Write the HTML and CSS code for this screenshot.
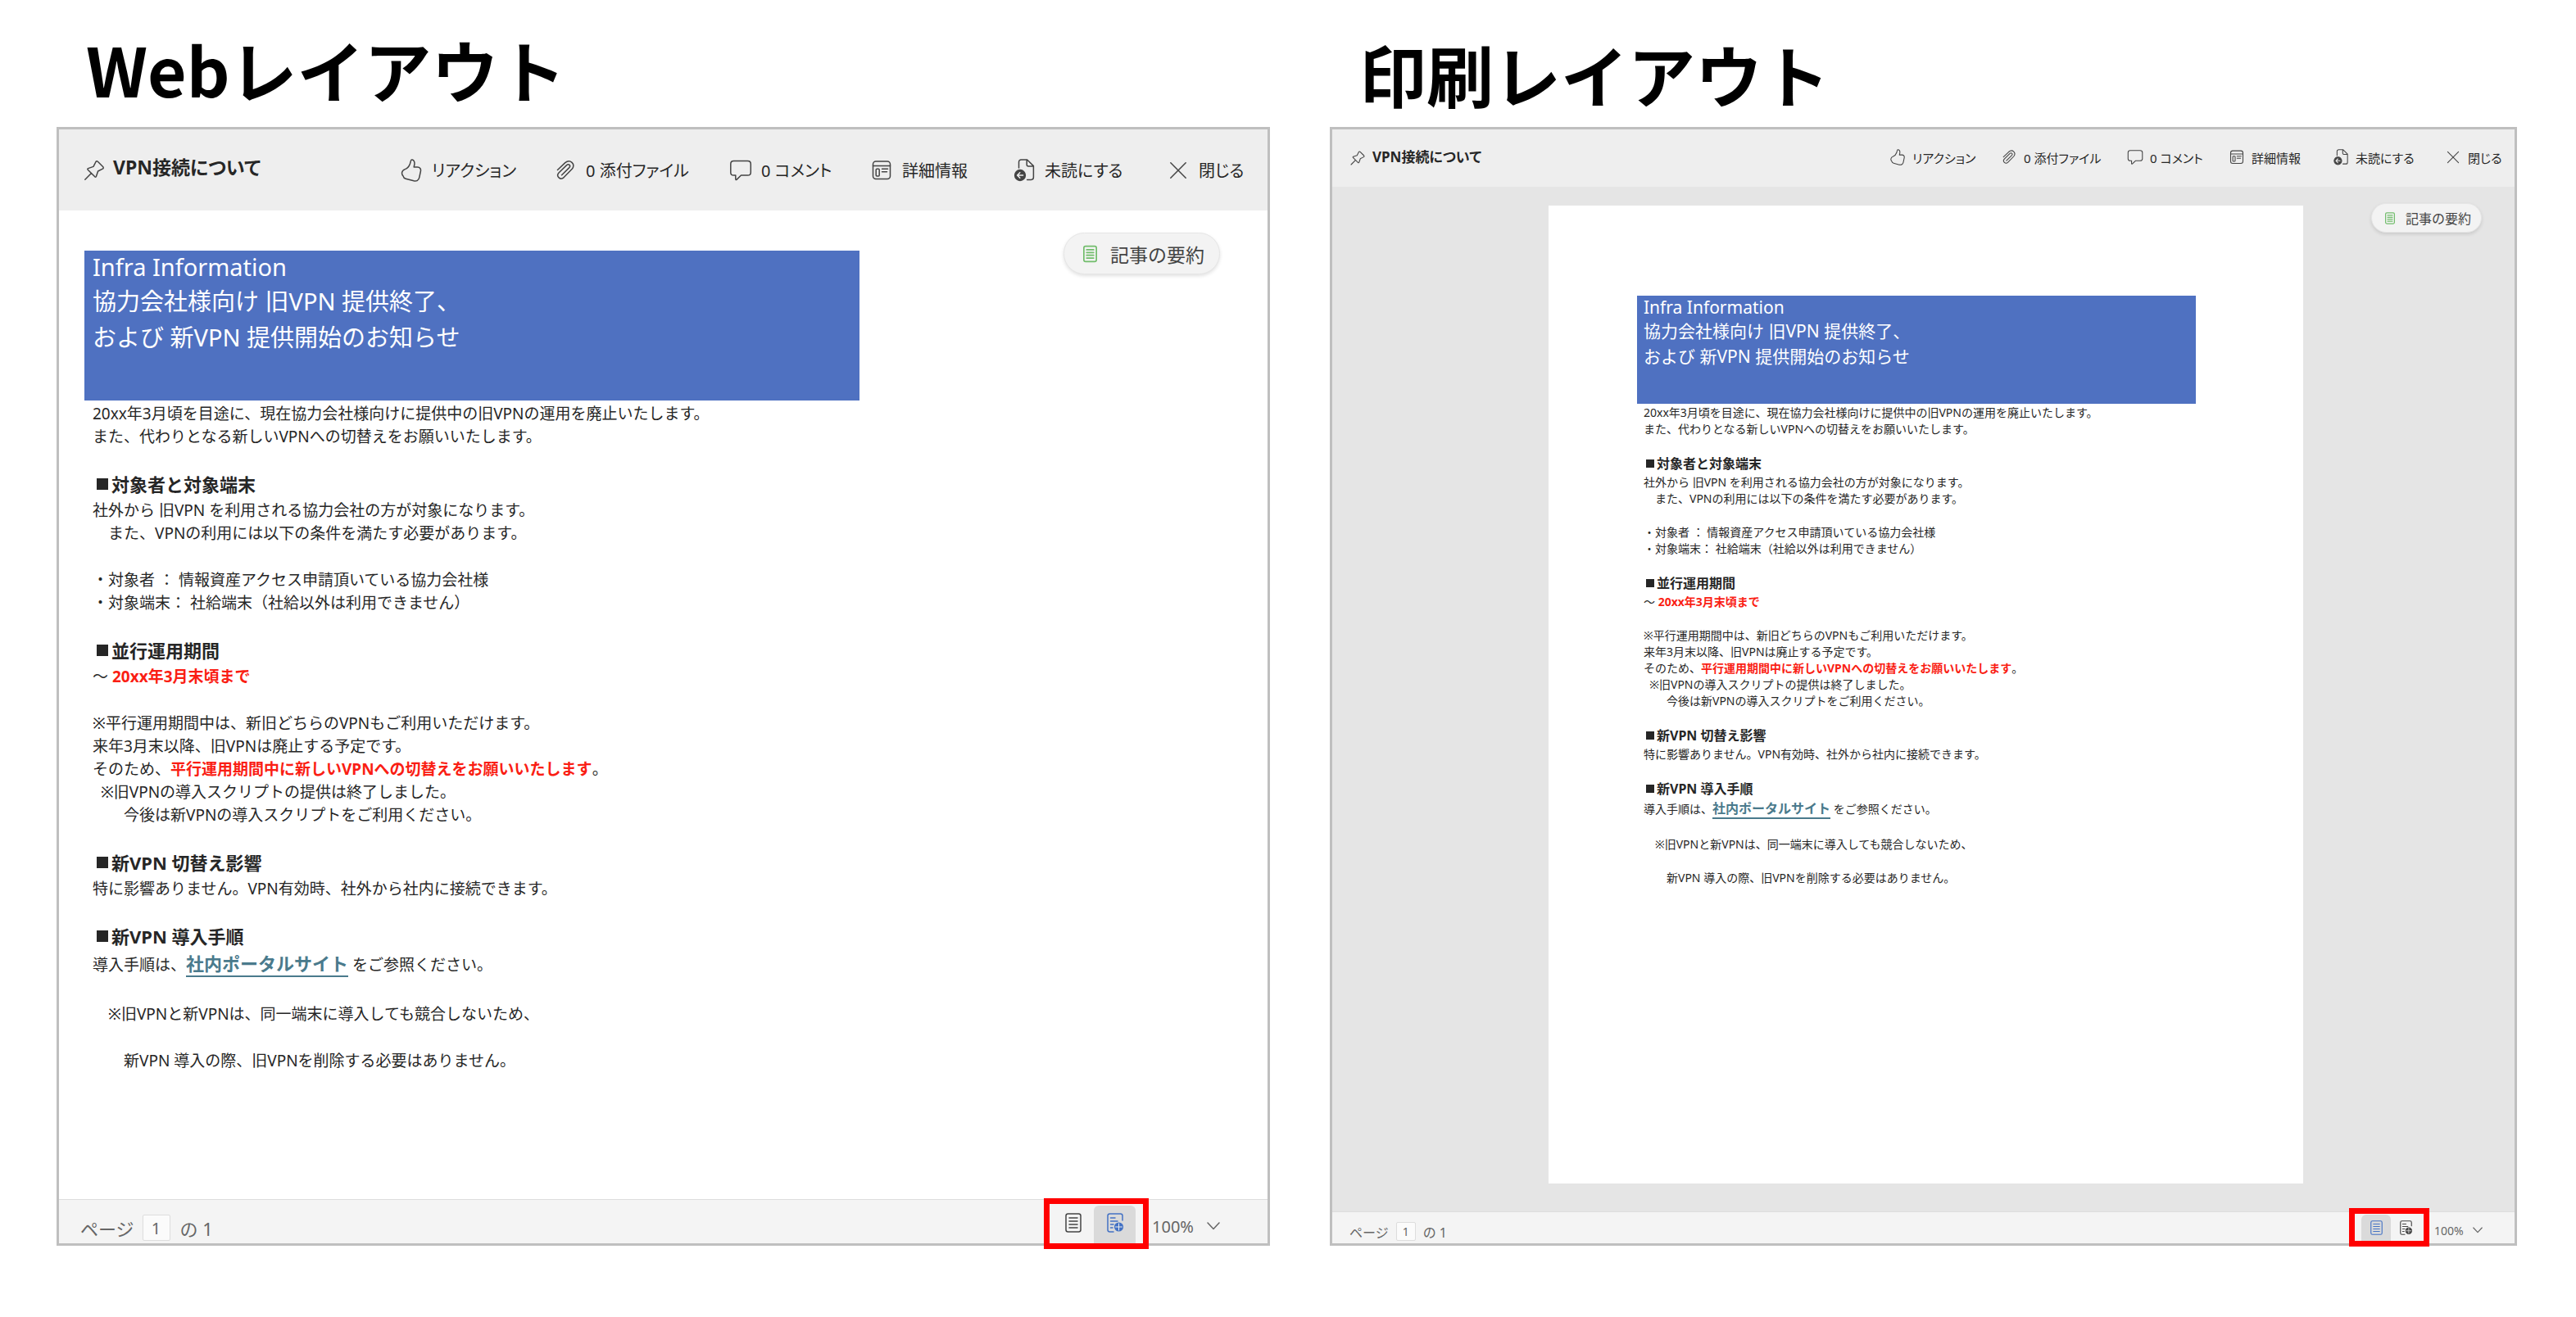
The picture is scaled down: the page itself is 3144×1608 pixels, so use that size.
FILE: index.html
```html
<!DOCTYPE html>
<html lang="ja">

<head>
  <meta charset="UTF-8">
  <meta name="viewport" content="width=device-width, initial-scale=1.0">
  <title>Webレイアウトと印刷レイアウト</title>
  <link rel="stylesheet" href="styles.css">
</head>

<body>
  <!-- アイコン定義 -->
  <svg class="defs" aria-hidden="true">
    <symbol id="pin" viewBox="0 0 28 28">
      <path d="M16 3.5 C16.6 2.6 17.6 2.6 18.3 3.3 L24.8 9.8 C25.5 10.6 25.3 11.6 24.3 12.1 L18.6 15 L16.4 21.4 C16.1 22.2 15.4 22.4 14.8 21.8 L6.2 13.2 C5.6 12.6 5.8 11.9 6.6 11.6 L13 9.4 Z M10.2 17.8 L2.8 25.2" />
    </symbol>
    <symbol id="like" viewBox="0 0 28 28">
      <path d="M15 1 C17.6 1.4 18.3 4.4 17.8 7 L17.2 10 H21.5 C24.4 10 26 12.2 25.4 15 L23.8 22.6 C23 26.2 20.4 27.6 17 26.8 L7.2 24.2 C5.4 23.7 4.4 22.6 4 20.8 C3 19.8 2.4 18.4 2.6 16.8 C2.8 14.6 4.2 13.4 6.4 12.6 C9.6 11.4 11.4 9 12.4 6 L13.4 2.4 C13.6 1.5 14.2 0.9 15 1 Z" />
    </symbol>
    <symbol id="clip" viewBox="0 0 28 28">
      <path d="M4.5 13.5 L13.8 4.6 C19.8 -0.4 27 6.4 22 12.6 L12.2 22.6 C8 26.6 2.2 21.2 6 17 L15.6 7.6 C18.2 5.4 21 8.2 18.8 10.6 L9.6 19.8" />
    </symbol>
    <symbol id="comment" viewBox="0 0 28 28">
      <path d="M5.5 2.5 H22.5 C24.8 2.5 26.3 4 26.3 6.2 V16.4 C26.3 18.6 24.8 20 22.5 20 H14.5 L9 25.4 C8.4 25.8 7.8 25.5 7.8 24.8 V20 H5.5 C3.2 20 1.8 18.6 1.8 16.4 V6.2 C1.8 4 3.2 2.5 5.5 2.5 Z" />
    </symbol>
    <symbol id="detail" viewBox="0 0 28 28">
      <rect x="3.5" y="3" width="21" height="21.5" rx="3.5" />
      <path d="M3.5 8.5 H24.5 M14.5 12.2 H21.5 M14.5 15.8 H20.5" />
      <rect x="7.2" y="12.2" width="4" height="8.8" rx="1" />
    </symbol>
    <symbol id="unread" viewBox="0 0 28 28">
      <path d="M7.5 11 V4 C7.5 2.2 8.6 1 10.4 1 H17.6 L25.4 8.6 V22.6 C25.4 24.4 24.4 25.4 22.6 25.4 H17.6 M17.2 1.4 V7 C17.2 8.4 17.8 9 19.2 9 H25" />
      <circle class="solid" cx="9" cy="20" r="6.4" />
      <path class="knock" d="M12.6 20 H5.8 M8.8 16.8 L5.6 20 L8.8 23.2" />
    </symbol>
    <symbol id="close" viewBox="0 0 28 28">
      <path d="M4.8 4.8 L23.2 23.2 M23.2 4.8 L4.8 23.2" />
    </symbol>
    <symbol id="doc" viewBox="0 0 20 24">
      <rect x="1" y="1" width="18" height="22" rx="2.5" />
      <path d="M5 6 H15 M5 10 H15 M5 14 H15 M5 18 H15" />
    </symbol>
    <symbol id="webdoc" viewBox="0 0 20 24">
      <path d="M8 23 H3.5 C2 23 1 22 1 20.5 V3.5 C1 2 2 1 3.5 1 H16.5 C18 1 19 2 19 3.5 V9 M4.5 6 H10 M4.5 10 H13 M4.5 14 H8 M4.5 18 H7" />
      <circle class="solid" cx="14.5" cy="17" r="4.8" />
      <path class="knock thin" d="M14.5 13 V21 M10.5 17 H18.5" />
    </symbol>
    <symbol id="chevron" viewBox="0 0 16 16">
      <path d="M1 4 L8 11.5 L15 4" />
    </symbol>
  </svg>

  <main class="compare">
    <section class="panel web">
      <h1 class="caption">Webレイアウト</h1>
      <div class="viewer">
        <header class="toolbar">
          <h2 class="subject"><svg><use href="#pin" /></svg><span>VPN接続について</span></h2>
          <nav class="actions">
            <button type="button"><svg><use href="#like" /></svg>リアクション</button>
            <button type="button"><svg><use href="#clip" /></svg>0 添付ファイル</button>
            <button type="button"><svg><use href="#comment" /></svg>0 コメント</button>
            <button type="button"><svg><use href="#detail" /></svg>詳細情報</button>
            <button type="button"><svg><use href="#unread" /></svg>未読にする</button>
            <button type="button"><svg><use href="#close" /></svg>閉じる</button>
          </nav>
        </header>

        <div class="content">
          <article class="article">
            <div class="banner">
              <p class="banner-label">Infra Information</p>
              <p>協力会社様向け 旧VPN 提供終了、<br>および 新VPN 提供開始のお知らせ</p>
            </div>
            <div class="text">
              <p>20xx年3月頃を目途に、現在協力会社様向けに提供中の旧VPNの運用を廃止いたします。<br>また、代わりとなる新しいVPNへの切替えをお願いいたします。</p>

              <h3>対象者と対象端末</h3>
              <p>社外から 旧VPN を利用される協力会社の方が対象になります。<br>　また、VPNの利用には以下の条件を満たす必要があります。</p>
              <p>・対象者 ： 情報資産アクセス申請頂いている協力会社様<br>・対象端末： 社給端末（社給以外は利用できません）</p>

              <h3>並行運用期間</h3>
              <p>～ <strong>20xx年3月末頃まで</strong></p>
              <p>※平行運用期間中は、新旧どちらのVPNもご利用いただけます。<br>来年3月末以降、旧VPNは廃止する予定です。<br>そのため、<strong>平行運用期間中に新しいVPNへの切替えをお願いいたします</strong>。<br>&nbsp;&nbsp;※旧VPNの導入スクリプトの提供は終了しました。<br>　　今後は新VPNの導入スクリプトをご利用ください。</p>

              <h3>新VPN 切替え影響</h3>
              <p>特に影響ありません。VPN有効時、社外から社内に接続できます。</p>

              <h3>新VPN 導入手順</h3>
              <p class="guide">導入手順は、<a href="#">社内ポータルサイト</a> をご参照ください。</p>
              <p>　※旧VPNと新VPNは、同一端末に導入しても競合しないため、</p>
              <p>　　新VPN 導入の際、旧VPNを削除する必要はありません。</p>
            </div>
          </article>
          <button type="button" class="summary"><svg><use href="#doc" /></svg>記事の要約</button>
        </div>

        <footer class="statusbar">
          <label for="page-web">ページ</label>
          <input type="text" id="page-web" value="1">
          <span>の 1</span>
          <div class="layout-switch">
            <button type="button" aria-label="印刷レイアウト"><svg><use href="#doc" /></svg></button>
            <button type="button" class="active" aria-label="Webレイアウト"><svg><use href="#webdoc" /></svg></button>
          </div>
          <div class="scale">
            <select aria-label="表示倍率">
              <option>100%</option>
            </select>
            <svg><use href="#chevron" /></svg>
          </div>
        </footer>
      </div>
    </section>

    <section class="panel print">
      <h1 class="caption">印刷レイアウト</h1>
      <div class="viewer">
        <header class="toolbar">
          <h2 class="subject"><svg><use href="#pin" /></svg><span>VPN接続について</span></h2>
          <nav class="actions">
            <button type="button"><svg><use href="#like" /></svg>リアクション</button>
            <button type="button"><svg><use href="#clip" /></svg>0 添付ファイル</button>
            <button type="button"><svg><use href="#comment" /></svg>0 コメント</button>
            <button type="button"><svg><use href="#detail" /></svg>詳細情報</button>
            <button type="button"><svg><use href="#unread" /></svg>未読にする</button>
            <button type="button"><svg><use href="#close" /></svg>閉じる</button>
          </nav>
        </header>

        <div class="content">
          <article class="article">
            <div class="banner">
              <p class="banner-label">Infra Information</p>
              <p>協力会社様向け 旧VPN 提供終了、<br>および 新VPN 提供開始のお知らせ</p>
            </div>
            <div class="text">
              <p>20xx年3月頃を目途に、現在協力会社様向けに提供中の旧VPNの運用を廃止いたします。<br>また、代わりとなる新しいVPNへの切替えをお願いいたします。</p>

              <h3>対象者と対象端末</h3>
              <p>社外から 旧VPN を利用される協力会社の方が対象になります。<br>　また、VPNの利用には以下の条件を満たす必要があります。</p>
              <p>・対象者 ： 情報資産アクセス申請頂いている協力会社様<br>・対象端末： 社給端末（社給以外は利用できません）</p>

              <h3>並行運用期間</h3>
              <p>～ <strong>20xx年3月末頃まで</strong></p>
              <p>※平行運用期間中は、新旧どちらのVPNもご利用いただけます。<br>来年3月末以降、旧VPNは廃止する予定です。<br>そのため、<strong>平行運用期間中に新しいVPNへの切替えをお願いいたします</strong>。<br>&nbsp;&nbsp;※旧VPNの導入スクリプトの提供は終了しました。<br>　　今後は新VPNの導入スクリプトをご利用ください。</p>

              <h3>新VPN 切替え影響</h3>
              <p>特に影響ありません。VPN有効時、社外から社内に接続できます。</p>

              <h3>新VPN 導入手順</h3>
              <p class="guide">導入手順は、<a href="#">社内ポータルサイト</a> をご参照ください。</p>
              <p>　※旧VPNと新VPNは、同一端末に導入しても競合しないため、</p>
              <p>　　新VPN 導入の際、旧VPNを削除する必要はありません。</p>
            </div>
          </article>
          <button type="button" class="summary"><svg><use href="#doc" /></svg>記事の要約</button>
        </div>

        <footer class="statusbar">
          <label for="page-print">ページ</label>
          <input type="text" id="page-print" value="1">
          <span>の 1</span>
          <div class="layout-switch">
            <button type="button" class="active" aria-label="印刷レイアウト"><svg><use href="#doc" /></svg></button>
            <button type="button" aria-label="Webレイアウト"><svg><use href="#webdoc" /></svg></button>
          </div>
          <div class="scale">
            <select aria-label="表示倍率">
              <option>100%</option>
            </select>
            <svg><use href="#chevron" /></svg>
          </div>
        </footer>
      </div>
    </section>
  </main>
</body>

</html>
```

FILE: styles.css
```css
* {
  box-sizing: border-box;
}

body {
  margin: 0;
  background: #fff;
  color: #262626;
  font-family: "Noto Sans", "Noto Sans CJK JP", sans-serif;
}

h1,
h2,
h3,
p {
  margin: 0;
}

button,
input,
select {
  font-family: inherit;
  color: inherit;
  border: none;
  background: none;
  padding: 0;
  margin: 0;
}

button {
  display: flex;
  align-items: center;
  white-space: nowrap;
  cursor: pointer;
}

svg {
  flex: none;
  fill: none;
  stroke: currentColor;
  stroke-width: 1.5;
  stroke-linejoin: round;
  stroke-linecap: round;
}

.defs {
  position: absolute;
  width: 0;
  height: 0;
}

.solid {
  fill: currentColor;
}

.knock {
  stroke: #eee;
}

.thin {
  stroke-width: 1;
}

/* 全体 */
.compare {
  display: grid;
  grid-template-columns: 1481fr 1449fr;
  gap: 73px;
  min-height: 100vh;
  padding: 0 72px 87px 69px;
}

.panel {
  display: flex;
  flex-direction: column;
  min-width: 0;
}

.caption {
  height: 155px;
  padding: 24px 0 0 36px;
  font-family: "Noto Sans CJK JP", sans-serif;
  font-size: 82px;
  line-height: 120px;
  color: #000;
}

.print .caption {
  padding-top: 30px;
}

.viewer {
  flex: 1;
  display: flex;
  flex-direction: column;
  border: 3px solid #bfbfbf;
}

/* ツールバー */
.toolbar {
  display: flex;
  align-items: center;
  justify-content: space-between;
  height: 99px;
  padding: 0 27px 0 29px;
  background: #eee;
}

.subject {
  display: flex;
  align-items: center;
  gap: 9px;
  font-size: 23px;
  font-feature-settings: "palt";
}

.subject span {
  padding-bottom: 10px;
}

.subject svg,
.actions svg {
  width: 28px;
  height: 28px;
  color: #444;
}

.actions {
  display: grid;
  grid-template-columns: 188px 214px 172px 174px 188px 96px;
}

.actions button {
  gap: 11px;
  font-size: 20px;
  font-feature-settings: "palt";
}

/* 本文 */
.content {
  flex: 1;
  display: flex;
  align-items: flex-start;
  justify-content: space-between;
  padding: 0 58px 30px 31px;
}

.article {
  flex: 0 1 946px;
  padding-top: 49px;
}

.banner {
  padding: 0 10px 55px;
  background: #4f71c1;
  color: #fff;
  font-size: 29px;
  line-height: 44px;
}

.banner-label {
  line-height: 40px;
}

.text {
  padding: 2px 10px 0;
  font-size: 19px;
  line-height: 28px;
}

.text p + p {
  margin-top: 29px;
}

.text h3 {
  display: flex;
  align-items: center;
  gap: 4px;
  margin: 29px 0 3px;
  padding-left: 5px;
  font-size: 22px;
  line-height: 30px;
}

/* 見出しの ■ */
.text h3::before {
  content: "";
  width: 14px;
  height: 14px;
  background: #262626;
}

.text strong {
  color: #fa1e14;
}

.text .guide {
  line-height: 34px;
}

.guide a {
  border-bottom: 2px solid #4a7a8c;
  color: #4a7a8c;
  font-size: 22px;
  font-weight: bold;
  line-height: 28px;
  text-decoration: none;
}

.summary {
  gap: 16px;
  height: 51px;
  margin-top: 27px;
  padding: 0 18px 0 23px;
  border: 1px solid #e6e6e6;
  border-radius: 26px;
  background: #f3f3f3;
  box-shadow: 0 2px 4px rgba(0, 0, 0, 0.12);
  color: #444;
  font-size: 23px;
}

.summary svg {
  width: 17px;
  height: 24px;
  color: #72bd6c;
  stroke-width: 2;
}

/* ステータスバー */
.statusbar {
  display: flex;
  align-items: flex-end;
  height: 54px;
  padding: 0 58px 0 26px;
  border-top: 1px solid #ddd;
  background: #f4f4f4;
  color: #666;
  font-size: 22px;
  line-height: 36px;
}

.statusbar input {
  width: 34px;
  height: 32px;
  margin: 0 12px 3px 10px;
  border: 1px solid #ddd;
  border-radius: 2px;
  background: #fbfbfb;
  font-size: 20px;
  text-align: center;
}

.layout-switch {
  position: relative;
  display: flex;
  margin-left: auto;
}

/* 切替ボタンを囲む赤枠 */
.layout-switch::after {
  content: "";
  position: absolute;
  inset: -9px -16px -7px -10px;
  border: 7px solid #f00;
  pointer-events: none;
}

.layout-switch button {
  justify-content: center;
  width: 51px;
  height: 46px;
  padding-bottom: 5px;
  color: #444;
}

.layout-switch .active {
  border-radius: 6px 6px 0 0;
  background: #dadada;
  color: #4472c4;
}

.layout-switch svg {
  width: 20px;
  height: 24px;
}

.scale {
  display: flex;
  align-items: center;
  height: 42px;
  margin-left: 20px;
}

.scale select {
  width: 67px;
  appearance: none;
  font-size: 20px;
}

.scale svg {
  width: 16px;
  height: 16px;
}

/* 印刷レイアウト側は縮小表示 */
.print .toolbar {
  height: 70px;
  padding: 0 15px 0 21px;
}

.print .subject {
  gap: 8px;
  font-size: 17px;
}

.print .subject span {
  padding-bottom: 6px;
}

.print .subject svg,
.print .actions svg {
  width: 20px;
  height: 20px;
}

.print .actions {
  grid-template-columns: 136px 154px 124px 127px 137px 70px;
  padding-bottom: 2px;
}

.print .actions button {
  gap: 8px;
  font-size: 15px;
}

.print .content {
  display: grid;
  grid-template-columns: 264fr 921fr 258fr;
  align-items: stretch;
  padding: 23px 0 34px;
  background: #e5e5e5;
}

.print .article {
  grid-column: 2;
  padding: 110px 131px 0 108px;
  background: #fff;
}

.print .banner {
  padding: 0 8px 42px;
  font-size: 21px;
  line-height: 31px;
}

.print .banner-label {
  line-height: 28px;
}

.print .text {
  padding: 1px 8px 0;
  font-size: 14px;
  line-height: 20px;
}

.print .text p + p {
  margin-top: 21px;
}

.print .text h3 {
  gap: 3px;
  margin: 21px 0 2px;
  padding-left: 3px;
  font-size: 16px;
  line-height: 22px;
}

.print .text h3::before {
  width: 10px;
  height: 10px;
}

.print .text .guide {
  line-height: 24px;
}

.print .guide a {
  font-size: 16px;
  line-height: 20px;
}

.print .summary {
  align-self: start;
  justify-self: end;
  gap: 13px;
  height: 36px;
  margin: -3px 40px 0 0;
  padding: 0 12px 0 16px;
  font-size: 16px;
}

.print .summary svg {
  width: 12px;
  height: 17px;
}

.print .statusbar {
  height: 39px;
  padding: 0 39px 0 21px;
  font-size: 16px;
  line-height: 26px;
}

.print .statusbar input {
  width: 24px;
  height: 23px;
  margin: 0 9px 3px;
  font-size: 14px;
}

.print .layout-switch::after {
  inset: -8px -11px -4px -15px;
}

.print .layout-switch button {
  width: 36px;
  height: 35px;
  padding-bottom: 3px;
}

.print .layout-switch svg {
  width: 15px;
  height: 18px;
}

.print .scale {
  height: 32px;
  margin-left: 17px;
}

.print .scale select {
  width: 47px;
  font-size: 14px;
}

.print .scale svg {
  width: 12px;
  height: 12px;
}
```
